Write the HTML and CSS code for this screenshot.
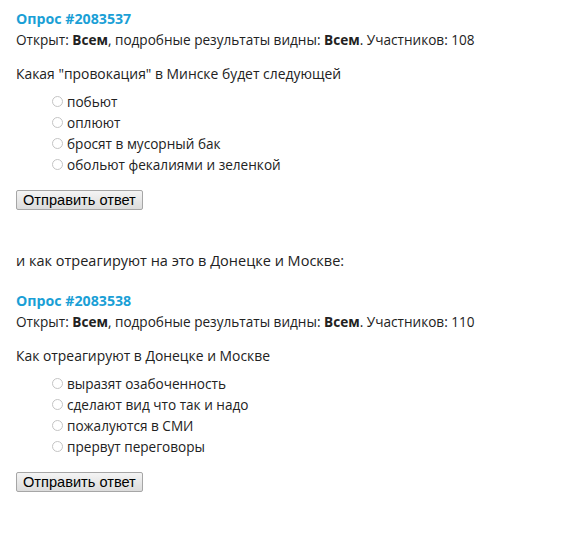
FILE: index.html
```html
<!DOCTYPE html>
<html lang="ru">
<head>
<meta charset="utf-8">
<link rel="stylesheet" href="styles.css">
</head>
<body>
<div class="poll">
  <div class="poll-title">Опрос #2083537</div>
  <div class="poll-meta">Открыт: <b>Всем</b>, подробные результаты видны: <b>Всем</b>. Участников: 108</div>
  <div class="poll-question">Какая "провокация" в Минске будет следующей</div>
  <ul class="options">
    <li><span class="radio"></span>побьют</li>
    <li><span class="radio"></span>оплюют</li>
    <li><span class="radio"></span>бросят в мусорный бак</li>
    <li><span class="radio"></span>обольют фекалиями и зеленкой</li>
  </ul>
  <button class="submit">Отправить ответ</button>
</div>
<p class="between">и как отреагируют на это в Донецке и Москве:</p>
<div class="poll">
  <div class="poll-title">Опрос #2083538</div>
  <div class="poll-meta">Открыт: <b>Всем</b>, подробные результаты видны: <b>Всем</b>. Участников: 110</div>
  <div class="poll-question">Как отреагируют в Донецке и Москве</div>
  <ul class="options">
    <li><span class="radio"></span>выразят озабоченность</li>
    <li><span class="radio"></span>сделают вид что так и надо</li>
    <li><span class="radio"></span>пожалуются в СМИ</li>
    <li><span class="radio"></span>прервут переговоры</li>
  </ul>
  <button class="submit">Отправить ответ</button>
</div>
</body>
</html>
```
FILE: styles.css
```css
html, body { background: #fff; }
body {
  margin: 0;
  padding: 8px 16px;
  font-family: "Open Sans", "Noto Sans", sans-serif;
  font-size: 13.6px;
  line-height: 21px;
  color: #222;
}
.poll-title {
  color: #1a9fd6;
  font-weight: 700;
  font-size: 14.2px;
}
.poll-meta b { font-weight: 700; }
.poll-question { margin-top: 13px; font-size: 13.9px; }
.options {
  list-style: none;
  margin: 7px 0 0;
  padding: 0 0 0 36px;
}
.options li {
  display: flex;
  align-items: center;
  gap: 4px;
  height: 21px;
}
.radio {
  width: 11px;
  height: 11px;
  border: 1px solid #c4c4c4;
  border-radius: 50%;
  box-sizing: border-box;
  background: #fff;
}
.submit {
  display: block;
  margin-top: 15px;
  font-family: "Liberation Sans", Arial, sans-serif;
  font-size: 14.6px;
  height: 20px;
  padding: 0 6px;
  color: #000;
  background: linear-gradient(#f4f4f4, #dcdcdc);
  border: 1px solid #a6a6a6;
  border-radius: 2px;
  line-height: 16px;
}
.between {
  margin: 40px 0 19px;
  font-size: 14.5px;
}
```
